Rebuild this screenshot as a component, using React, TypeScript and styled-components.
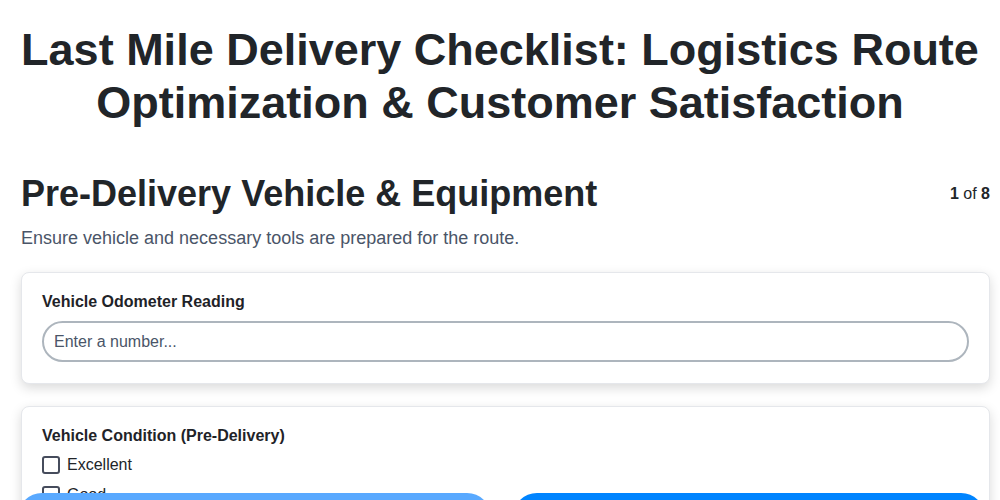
import * as React from 'react';
import styled, { createGlobalStyle } from 'styled-components';

const GlobalStyle = createGlobalStyle`
	body {
		margin: 0;
		background: #ffffff;
		font-family: "Liberation Sans", Arial, sans-serif;
		color: #212529;
	}
`;

const Page = styled.div`
	padding: 23px 0 120px;
`;

const Title = styled.h1`
	margin: 0 0 43px;
	padding: 0 20px;
	font-size: 45px;
	line-height: 53px;
	font-weight: 700;
	text-align: center;
	color: #212529;
`;

const Step = styled.div`
	padding: 0 10px 0 21px;
`;

const StepHeader = styled.div`
	display: flex;
	justify-content: space-between;
	align-items: center;
`;

const StepTitle = styled.h2`
	margin: 0;
	font-size: 36px;
	line-height: 43px;
	font-weight: 700;
	color: #212529;
`;

const StepCount = styled.div`
	font-size: 16px;
	color: #212529;
	b {
		font-weight: 700;
	}
`;

const StepDescription = styled.p`
	margin: 10px 0 20px;
	font-size: 18px;
	line-height: 27px;
	color: #4a5568;
`;

const Card = styled.div`
	background: #ffffff;
	border: 1px solid #e5e7eb;
	border-radius: 8px;
	box-shadow: 0 4px 12px rgba(0, 0, 0, 0.15);
	padding: 19px 20px 21px;
	margin-bottom: 22px;
`;

const FieldLabel = styled.div`
	font-size: 16px;
	line-height: 20px;
	font-weight: 700;
	color: #1f2328;
	margin-bottom: 9px;
`;

const NumberInput = styled.input`
	box-sizing: border-box;
	width: 100%;
	height: 41px;
	border: 2px solid #adb5bd;
	border-radius: 999px;
	padding: 0 10px;
	font-family: "Liberation Sans", Arial, sans-serif;
	font-size: 16px;
	color: #212529;
	outline: none;
	&::placeholder {
		color: #4a5568;
	}
`;

const OptionList = styled.div`
	display: flex;
	flex-direction: column;
	gap: 10px;
	margin-top: 1px;
`;

const OptionRow = styled.label`
	display: flex;
	align-items: center;
	gap: 7px;
	font-size: 16px;
	line-height: 20px;
	color: #212529;
`;

const Box = styled.span`
	box-sizing: border-box;
	width: 18px;
	height: 18px;
	border: 2px solid #464c5c;
	border-radius: 3px;
	background: #ffffff;
`;

const Footer = styled.div`
	position: fixed;
	left: 0;
	right: 0;
	top: 493px;
	display: flex;
	gap: 22px;
	padding: 0 15px 0 18px;
`;

const NavButton = styled.button<{ $disabled?: boolean }>`
	flex: 1;
	height: 48px;
	border: none;
	border-radius: 24px;
	background: ${p => (p.$disabled ? '#59a9ff' : '#0084ff')};
	color: #ffffff;
	font-family: "Liberation Sans", Arial, sans-serif;
	font-size: 16px;
	font-weight: 700;
`;

const options = ['Excellent', 'Good', 'Fair', 'Poor'];

export default function App() {
	return (
		<>
			<GlobalStyle />
			<Page>
				<Title>
					Last Mile Delivery Checklist: Logistics Route Optimization &amp; Customer Satisfaction
				</Title>
				<Step>
					<StepHeader>
						<StepTitle>Pre-Delivery Vehicle &amp; Equipment</StepTitle>
						<StepCount>
							<b>1</b> of <b>8</b>
						</StepCount>
					</StepHeader>
					<StepDescription>Ensure vehicle and necessary tools are prepared for the route.</StepDescription>
					<Card>
						<FieldLabel>Vehicle Odometer Reading</FieldLabel>
						<NumberInput type="text" placeholder="Enter a number..." />
					</Card>
					<Card>
						<FieldLabel>Vehicle Condition (Pre-Delivery)</FieldLabel>
						<OptionList>
							{options.map(o => (
								<OptionRow key={o}>
									<Box />
									{o}
								</OptionRow>
							))}
						</OptionList>
					</Card>
				</Step>
			</Page>
			<Footer>
				<NavButton $disabled>Previous</NavButton>
				<NavButton>Next</NavButton>
			</Footer>
		</>
	);
}
